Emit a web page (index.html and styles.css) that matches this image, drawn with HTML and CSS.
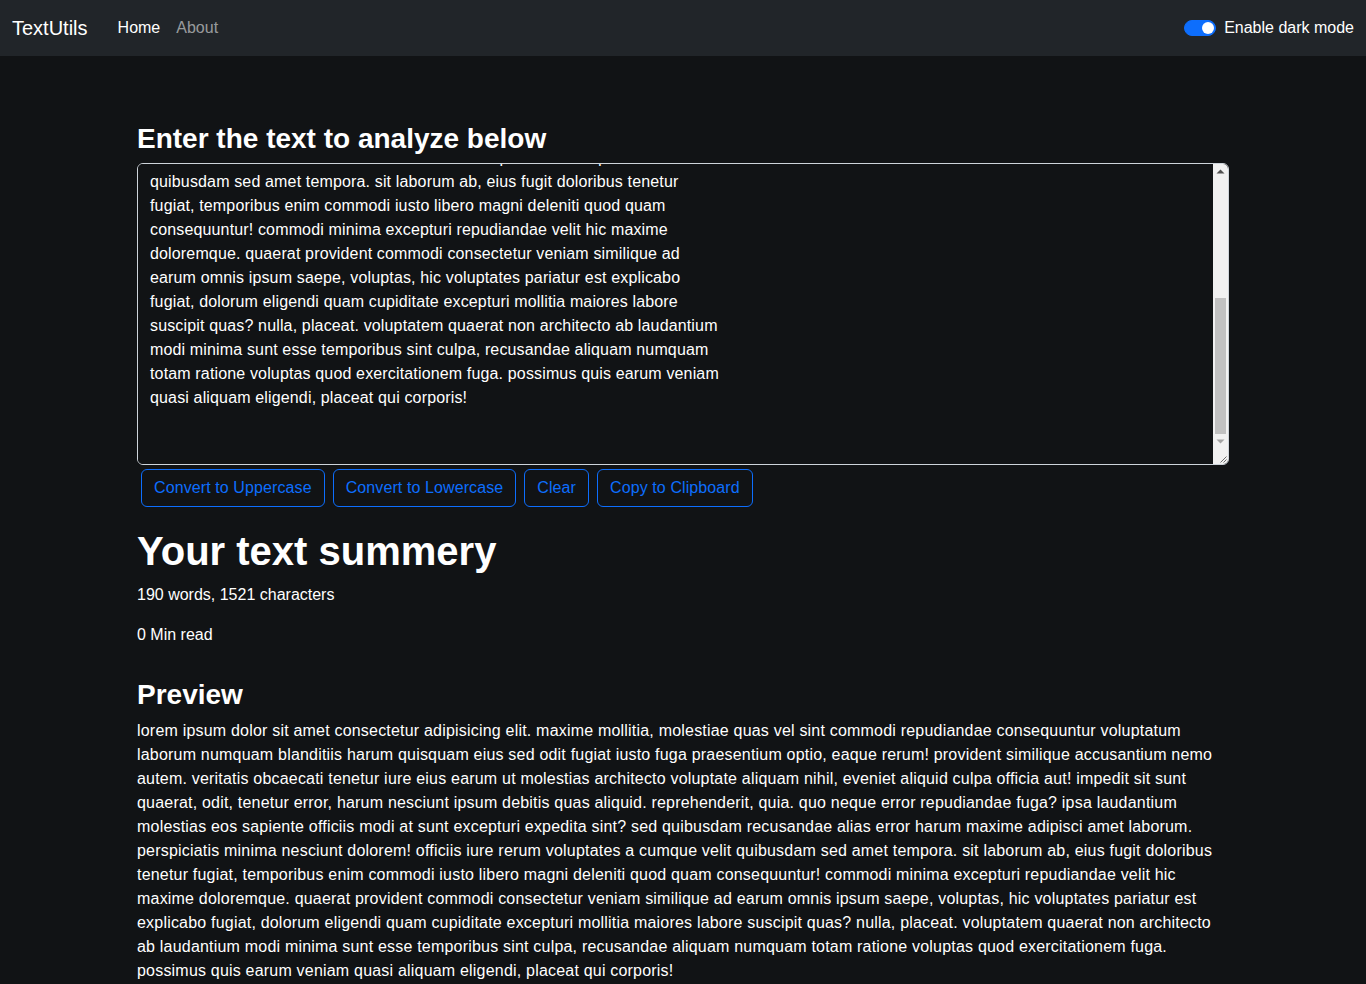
FILE: index.html
```html
<!DOCTYPE html>
<html lang="en">
<head>
<meta charset="utf-8">
<title>TextUtils</title>
<link rel="stylesheet" href="styles.css">
</head>
<body>
<nav class="navbar">
  <div class="nav-inner">
    <a class="brand" href="#">TextUtils</a>
    <ul class="nav-links">
      <li><a class="nav-link active" href="#">Home</a></li>
      <li><a class="nav-link" href="#">About</a></li>
    </ul>
    <label class="mode-switch">
      <span class="switch-track"></span>
      <span class="switch-label">Enable dark mode</span>
    </label>
  </div>
</nav>
<div class="alert-space"></div>
<div class="page">
  <div class="section">
    <h1 class="form-title">Enter the text to analyze below</h1>
    <div class="field">
      <textarea class="text-input" id="myBox" rows="12">lorem ipsum dolor sit amet consectetur adipisicing elit. maxime mollitia,
molestiae quas vel sint commodi repudiandae consequuntur voluptatum laborum
numquam blanditiis harum quisquam eius sed odit fugiat iusto fuga praesentium
optio, eaque rerum! provident similique accusantium nemo autem. veritatis
obcaecati tenetur iure eius earum ut molestias architecto voluptate aliquam
nihil, eveniet aliquid culpa officia aut! impedit sit sunt quaerat, odit,
tenetur error, harum nesciunt ipsum debitis quas aliquid. reprehenderit,
quia. quo neque error repudiandae fuga? ipsa laudantium molestias eos
sapiente officiis modi at sunt excepturi expedita sint? sed quibusdam
recusandae alias error harum maxime adipisci amet laborum. perspiciatis
minima nesciunt dolorem! officiis iure rerum voluptates a cumque velit
quibusdam sed amet tempora. sit laborum ab, eius fugit doloribus tenetur
fugiat, temporibus enim commodi iusto libero magni deleniti quod quam
consequuntur! commodi minima excepturi repudiandae velit hic maxime
doloremque. quaerat provident commodi consectetur veniam similique ad
earum omnis ipsum saepe, voluptas, hic voluptates pariatur est explicabo
fugiat, dolorum eligendi quam cupiditate excepturi mollitia maiores labore
suscipit quas? nulla, placeat. voluptatem quaerat non architecto ab laudantium
modi minima sunt esse temporibus sint culpa, recusandae aliquam numquam
totam ratione voluptas quod exercitationem fuga. possimus quis earum veniam
quasi aliquam eligendi, placeat qui corporis!

</textarea>
      <div class="scrollbar" aria-hidden="true">
        <span class="sb-btn"><svg width="15" height="15" viewBox="0 0 15 15"><polygon points="3.5,9.5 7.5,5.5 11.5,9.5" fill="#505050"/></svg></span>
        <span class="sb-track"><span class="sb-thumb"></span></span>
        <span class="sb-btn"><svg width="15" height="15" viewBox="0 0 15 15"><polygon points="3.5,5.5 7.5,9.5 11.5,5.5" fill="#a3a3a3"/></svg></span>
        <span class="sb-corner"><svg width="15" height="15" viewBox="0 0 15 15"><path d="M13.5 7.5 L7.5 13.5 M13.5 10.5 L10.5 13.5" stroke="#6b6b6b" stroke-width="1" fill="none"/></svg></span>
      </div>
    </div>
    <div class="actions">
      <button class="btn">Convert to Uppercase</button>
      <button class="btn">Convert to Lowercase</button>
      <button class="btn">Clear</button>
      <button class="btn">Copy to Clipboard</button>
    </div>
  </div>
  <div class="section summary">
    <h1 class="summary-title">Your text summery</h1>
    <p class="stat">190 words, 1521 characters</p>
    <p class="stat">0 Min read</p>
    <h2 class="preview-title">Preview</h2>
    <p class="preview">lorem ipsum dolor sit amet consectetur adipisicing elit. maxime mollitia, molestiae quas vel sint commodi repudiandae consequuntur voluptatum laborum numquam blanditiis harum quisquam eius sed odit fugiat iusto fuga praesentium optio, eaque rerum! provident similique accusantium nemo autem. veritatis obcaecati tenetur iure eius earum ut molestias architecto voluptate aliquam nihil, eveniet aliquid culpa officia aut! impedit sit sunt quaerat, odit, tenetur error, harum nesciunt ipsum debitis quas aliquid. reprehenderit, quia. quo neque error repudiandae fuga? ipsa laudantium molestias eos sapiente officiis modi at sunt excepturi expedita sint? sed quibusdam recusandae alias error harum maxime adipisci amet laborum. perspiciatis minima nesciunt dolorem! officiis iure rerum voluptates a cumque velit quibusdam sed amet tempora. sit laborum ab, eius fugit doloribus tenetur fugiat, temporibus enim commodi iusto libero magni deleniti quod quam consequuntur! commodi minima excepturi repudiandae velit hic maxime doloremque. quaerat provident commodi consectetur veniam similique ad earum omnis ipsum saepe, voluptas, hic voluptates pariatur est explicabo fugiat, dolorum eligendi quam cupiditate excepturi mollitia maiores labore suscipit quas? nulla, placeat. voluptatem quaerat non architecto ab laudantium modi minima sunt esse temporibus sint culpa, recusandae aliquam numquam totam ratione voluptas quod exercitationem fuga. possimus quis earum veniam quasi aliquam eligendi, placeat qui corporis!</p>
  </div>
</div>
<script src="script.js"></script>
</body>
</html>
```
FILE: styles.css
```css
* { box-sizing: border-box; }
html, body { margin: 0; padding: 0; }
body {
  background: #111315;
  color: #fff;
  font-family: "Liberation Sans", Arial, sans-serif;
  font-size: 16px;
  line-height: 1.5;
}
.navbar {
  background: #212529;
  padding: 8px 0;
  height: 56px;
}
.nav-inner {
  display: flex;
  align-items: center;
  padding: 0 12px;
}
.brand {
  color: #fff;
  text-decoration: none;
  font-size: 20px;
  line-height: 30px;
  padding: 5px 0;
  margin-right: 22px;
}
.nav-links {
  display: flex;
  list-style: none;
  margin: 0;
  padding: 0;
  flex: 1;
}
.nav-link {
  display: block;
  padding: 8px;
  color: rgba(255, 255, 255, 0.55);
  text-decoration: none;
}
.nav-link.active { color: #fff; }
.mode-switch {
  display: flex;
  align-items: center;
  gap: 8px;
}
.switch-track {
  position: relative;
  display: block;
  width: 32px;
  height: 16px;
  border-radius: 8px;
  background: #0d6efd;
  border: 1px solid #0d6efd;
}
.switch-track::after {
  content: "";
  position: absolute;
  right: 1px;
  top: 1px;
  width: 12px;
  height: 12px;
  border-radius: 50%;
  background: #fff;
}
.switch-label { color: #fff; }
.alert-space { height: 50px; }
.page {
  width: 1140px;
  margin: 16px auto;
  padding: 0 12px;
}
.section { padding: 0 12px; }
.form-title {
  font-size: 28px;
  font-weight: 700;
  line-height: 1.2;
  margin: 0 0 7px;
}
.field { position: relative; }
.text-input {
  display: block;
  width: 100%;
  padding: 6px 12px;
  font-family: inherit;
  font-size: 16px;
  line-height: 1.5;
  letter-spacing: 0.15px;
  color: #fff;
  background: #111315;
  border: 1px solid #ced4da;
  border-radius: 6px;
  margin: 0;
  resize: vertical;
}
.scrollbar {
  position: absolute;
  top: 1px;
  right: 1px;
  bottom: 1px;
  width: 15px;
  display: flex;
  flex-direction: column;
  background: #f1f1f1;
  border-top-right-radius: 5px;
  border-bottom-right-radius: 5px;
  overflow: hidden;
}
.sb-btn, .sb-corner {
  display: block;
  width: 15px;
  height: 15px;
  flex: none;
}
.sb-btn svg, .sb-corner svg { display: block; }
.sb-track {
  flex: 1;
  display: flex;
  flex-direction: column;
  justify-content: flex-end;
  padding: 0 2px;
}
.sb-thumb {
  display: block;
  height: 136px;
  background: #c1c1c1;
}
.sb-corner { background: #f1f1f1; }
.actions {
  display: flex;
  flex-wrap: wrap;
}
.btn {
  margin: 4px;
  padding: 6px 12px;
  font-family: inherit;
  font-size: 16px;
  line-height: 1.5;
  letter-spacing: 0.1px;
  color: #0d6efd;
  background: transparent;
  border: 1px solid #0d6efd;
  border-radius: 6px;
}
.summary { margin-top: 16px; }
.summary-title {
  font-size: 40px;
  font-weight: 700;
  line-height: 1.2;
  margin: 0 0 8px;
}
.stat { margin: 0 0 16px; }
.preview-title {
  font-size: 28px;
  font-weight: 700;
  line-height: 1.2;
  margin: 31px 0 8px;
}
.preview {
  margin: 0 0 16px;
  letter-spacing: 0.2px;
}
```
FILE: script.js
```js
var box = document.getElementById('myBox');
box.scrollTop = box.scrollHeight;
```
